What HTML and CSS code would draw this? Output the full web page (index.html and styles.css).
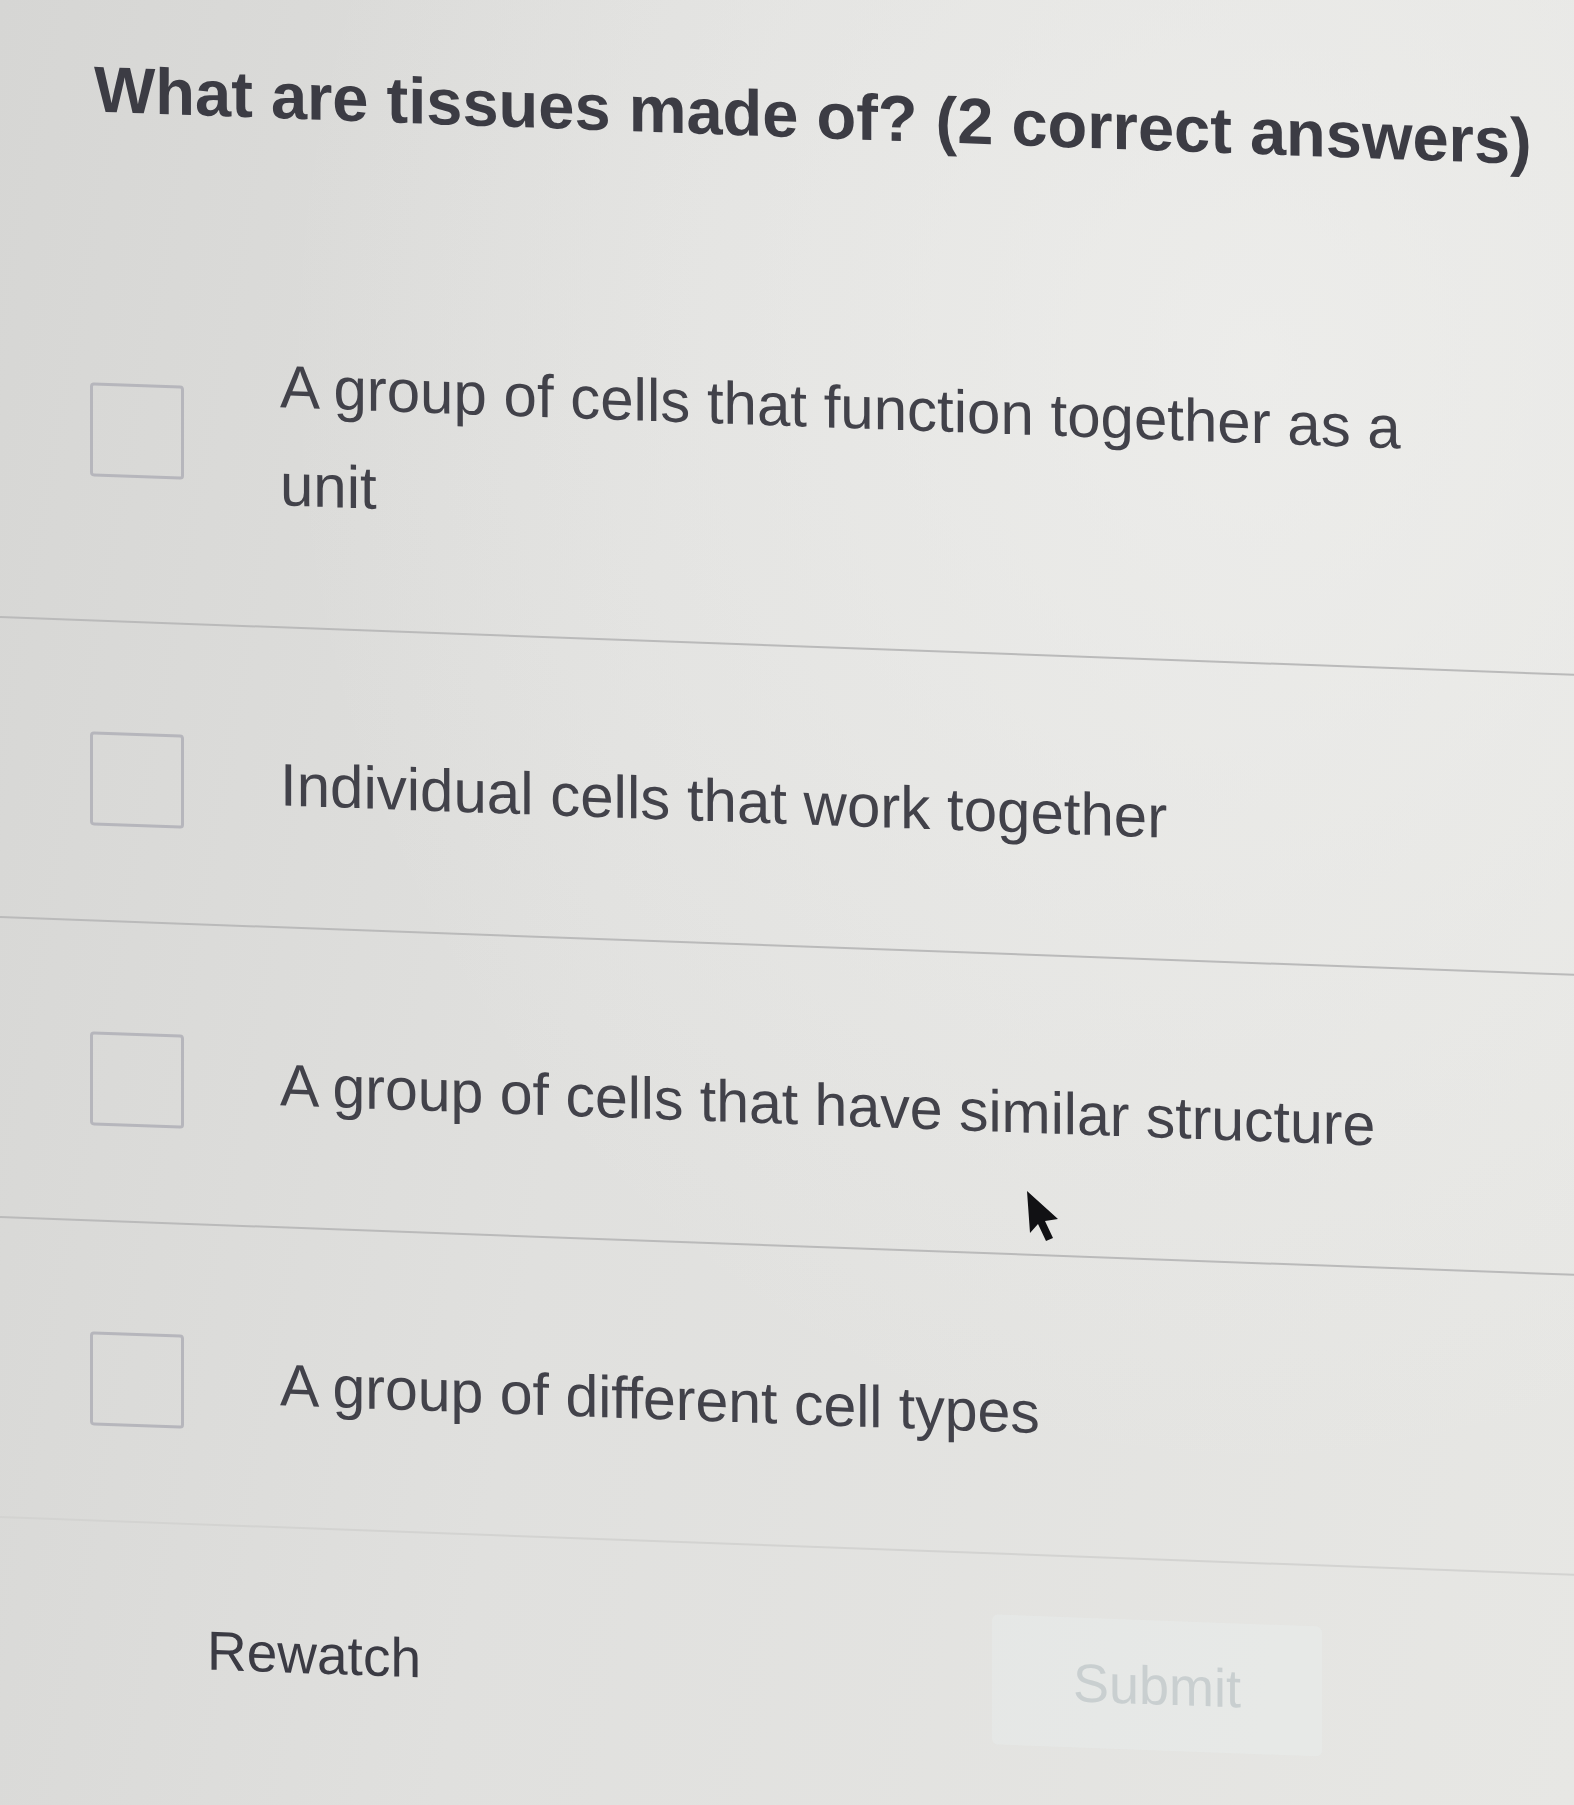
FILE: index.html
```html
<!DOCTYPE html>
<html lang="en">
<head>
<meta charset="utf-8">
<title>Quiz</title>
<link rel="stylesheet" href="styles.css">
</head>
<body>
<main class="quiz">
  <h1 class="question">What are tissues made of? (2 correct answers)</h1>
  <ul class="options">
    <li class="option"><span class="box"></span><span class="label">A group of cells that function together as a unit</span></li>
    <li class="option"><span class="box"></span><span class="label">Individual cells that work together</span></li>
    <li class="option"><span class="box"></span><span class="label">A group of cells that have similar structure</span></li>
    <li class="option"><span class="box"></span><span class="label">A group of different cell types</span></li>
  </ul>
  <div class="actions">
    <button class="rewatch" type="button">Rewatch</button>
    <button class="submit" type="button" disabled>Submit</button>
  </div>
</main>
<svg class="cursor" width="46" height="58" viewBox="0 0 46 58" aria-hidden="true">
  <path d="M4 2 L7 44 L15 35 L23 52 L30 49 L22 32 L35 30 Z" fill="#111114"/>
</svg>
</body>
</html>
```
FILE: styles.css
```css
html, body {
  margin: 0;
  padding: 0;
}

body {
  position: relative;
  width: 1574px;
  height: 1805px;
  overflow: hidden;
  font-family: "Liberation Sans", Arial, sans-serif;
  background:
    radial-gradient(ellipse at 80% 20%, rgba(240, 240, 238, 0.7) 0%, rgba(240, 240, 238, 0) 55%),
    linear-gradient(100deg, #d6d6d4 0%, #e0e0de 40%, #e7e7e4 100%);
}

.quiz {
  transform: skewY(2.1deg);
  transform-origin: 0 0;
  padding-top: 48px;
}

.question {
  margin: 0 0 97px;
  padding-left: 94px;
  font-size: 65px;
  line-height: 75px;
  font-weight: bold;
  color: #3c3c44;
}

.options {
  list-style: none;
  margin: 0;
  padding: 0;
}

.option {
  display: flex;
  align-items: center;
  gap: 96px;
  padding: 108px 90px 92px 90px;
  border-bottom: 2px solid #bababa;
}

.option:last-child {
  border-bottom-color: #d3d3d1;
}

.box {
  flex: none;
  width: 88px;
  height: 88px;
  border: 3px solid #b6b6bc;
  border-radius: 4px;
}

.label {
  font-size: 60px;
  line-height: 98px;
  color: #42424a;
}

.option:nth-child(3) .label,
.option:nth-child(4) .label {
  font-size: 59px;
}

.actions {
  display: flex;
  align-items: center;
  padding: 60px 0 0 207px;
}

.rewatch {
  padding: 0;
  border: 0;
  background: none;
  font-family: "Liberation Sans", Arial, sans-serif;
  font-size: 55px;
  line-height: 62px;
  color: #3b3b44;
}

.submit {
  margin-left: 571px;
  width: 330px;
  height: 130px;
  border: 0;
  border-radius: 6px;
  background: rgba(236, 241, 241, 0.3);
  font-family: "Liberation Sans", Arial, sans-serif;
  font-size: 54px;
  color: #c9cfd0;
}

.cursor {
  position: absolute;
  left: 1023px;
  top: 1189px;
}
```
